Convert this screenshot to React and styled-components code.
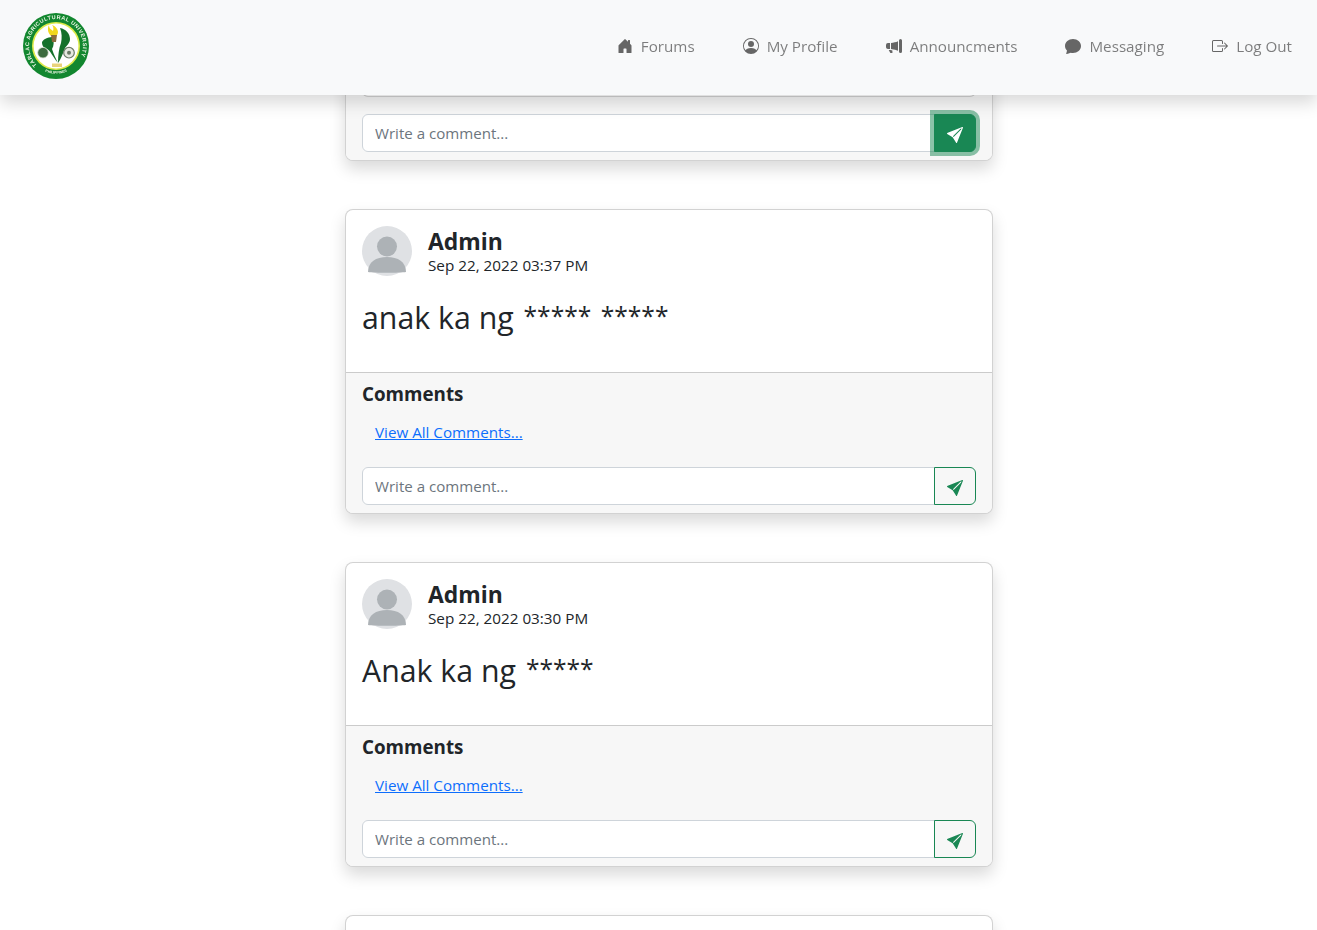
import styled, { createGlobalStyle } from 'styled-components';
import {
  BsHouseDoorFill,
  BsPersonCircle,
  BsMegaphoneFill,
  BsChatFill,
  BsBoxArrowRight,
  BsSendFill,
} from 'react-icons/bs';

const GlobalStyle = createGlobalStyle`
  html, body {
    margin: 0;
    padding: 0;
    background: #fff;
    overflow: hidden;
  }
  body {
    font-family: "Open Sans", "Noto Sans", "Liberation Sans", sans-serif;
    color: #212529;
  }
  * {
    box-sizing: border-box;
  }
`;

const Page = styled.div`
  height: 930px;
  overflow: hidden;
`;

const Navbar = styled.nav`
  position: fixed;
  top: 0;
  left: 0;
  right: 0;
  z-index: 10;
  height: 95px;
  display: flex;
  align-items: center;
  justify-content: space-between;
  padding: 0 25px 4px 23px;
  background-color: #f8f9fa;
  box-shadow: 0 8px 16px rgba(0, 0, 0, 0.15);
`;

const LogoMark = styled.svg`
  width: 66px;
  height: 66px;
  filter: blur(0.35px);
`;

const NavLinks = styled.div`
  display: flex;
  align-items: center;
  gap: 48px;
`;

const NavLink = styled.a`
  display: flex;
  align-items: center;
  gap: 8px;
  font-size: 15.2px;
  line-height: 24px;
  color: rgba(0, 0, 0, 0.5);
  text-decoration: none;

  svg {
    width: 16px;
    height: 16px;
    color: #666;
  }
`;

const Feed = styled.main`
  width: 648px;
  margin-left: 345px;
  padding-top: 28px;
  display: flex;
  flex-direction: column;
  gap: 48px;
`;

const Card = styled.article`
  border: 1px solid rgba(0, 0, 0, 0.175);
  border-radius: 8px;
  background: #fff;
  box-shadow: 0 8px 16px rgba(0, 0, 0, 0.15);
  overflow: hidden;
  flex-shrink: 0;
  min-height: ${(p) => (p.$stub ? '60px' : '0')};
`;

const CardBody = styled.div`
  padding: 16px 16px 0;
  height: 162px;
`;

const Author = styled.div`
  display: flex;
  align-items: center;
  gap: 16px;
`;

const AuthorName = styled.div`
  font-size: 22.9px;
  font-weight: 700;
  line-height: 26px;
  margin-top: 2px;
`;

const PostDate = styled.div`
  font-size: 15.25px;
  line-height: 20px;
`;

const PostText = styled.div`
  margin-top: 22px;
  font-size: 30.3px;
  line-height: 40px;
`;

const Stars = styled.span`
  font-size: 24.6px;
  margin-left: 2px;
  word-spacing: 3px;
  position: relative;
  top: -4px;
`;

const CardFooter = styled.div`
  padding: 8px 16px;
  background: #f7f7f7;
  border-top: ${(p) => (p.$flush ? 'none' : '1px solid rgba(0, 0, 0, 0.175)')};
`;

const CommentsTitle = styled.div`
  font-size: 18.8px;
  font-weight: 700;
  line-height: 24px;
  position: relative;
  top: 1px;
`;

const ViewAll = styled.a`
  display: block;
  margin: 15px 0 23px 13px;
  font-size: 15.2px;
  line-height: 24px;
  color: #0d6efd;
  text-decoration: underline;
`;

const CommentBox = styled.div`
  height: 60px;
  margin-bottom: 17px;
  border: 1px solid rgba(0, 0, 0, 0.175);
  border-radius: 6px;
  background: #fff;
`;

const CommentForm = styled.form`
  display: flex;
  height: 38px;
`;

const CommentInput = styled.input`
  flex: 1;
  min-width: 0;
  height: 38px;
  padding: 6px 12px;
  border: 1px solid #ced4da;
  border-radius: 6px 0 0 6px;
  background: #fff;
  font-family: inherit;
  font-size: 15.1px;
  outline: none;

  &::placeholder {
    color: #6c757d;
    opacity: 1;
  }
`;

const SendButton = styled.button`
  position: relative;
  width: 42px;
  height: 38px;
  margin-left: -1px;
  padding: 3px 0 0;
  display: flex;
  align-items: center;
  justify-content: center;
  border: 1px solid #198754;
  border-radius: 0 6px 6px 0;
  background: ${(p) => (p.$focused ? '#198754' : 'transparent')};
  color: ${(p) => (p.$focused ? '#fff' : '#198754')};
  box-shadow: ${(p) => (p.$focused ? '0 0 0 4px rgba(25, 135, 84, 0.5)' : 'none')};

  svg {
    width: 16px;
    height: 16px;
  }
`;

const Logo = () => (
  <LogoMark viewBox="0 0 66 66" role="img" aria-label="Tarlac Agricultural University seal">
    <defs>
      <path id="sealTop" d="M15.7 50.3 A24.5 24.5 0 1 1 50.3 50.3" />
      <path id="sealBottom" d="M19 57 A28 28 0 0 0 47 57" />
    </defs>
    <circle cx="33" cy="33" r="33" fill="#12872f" />
    <circle cx="33" cy="33" r="24" fill="#dcea4a" />
    <circle cx="33" cy="33" r="22.4" fill="#fff" />
    <text fontFamily="Liberation Sans, sans-serif" fontSize="5" fontWeight="700" fill="#eef6e6" letterSpacing="0.45" transform="translate(33 33) scale(1.1) translate(-33 -33)">
      <textPath href="#sealTop">TARLAC AGRICULTURAL UNIVERSITY</textPath>
    </text>
    <text fontFamily="Liberation Sans, sans-serif" fontSize="3.6" fontWeight="700" fill="#eef6e6">
      <textPath href="#sealBottom" startOffset="12%">PHILIPPINES</textPath>
    </text>
    <path d="M19 29C21 25 27 24 30 24C31 29 31 33 29 36C31 42 33 46 35 50C30 44 27 37 24 36C21 35 19 33 19 29z" fill="#14702a" />
    <path d="M37 15C43 16 47 21 47 26C47 30 44 32 42 35C40 40 38 46 35 50C35 42 36 35 38 30C39 25 39 20 37 15z" fill="#14702a" />
    <path d="M26 12C26 16 28 16 30 18C31 15 30 13 29 12C32 13 35 16 35 19C35 21 34 22 33 23H28C25 20 24 16 26 12z" fill="#f2d71e" />
    <path d="M28 22h6l-1 7h-4z" fill="#8a6a3d" />
    <circle cx="20" cy="39.7" r="5.3" fill="#3d6b3f" stroke="#d9dfd0" strokeWidth="0.8" />
    <circle cx="46" cy="39.7" r="5.3" fill="#e6e8e0" stroke="#6a7a66" strokeWidth="1.2" />
    <circle cx="46" cy="39.7" r="2" fill="#6a7a66" />
    <path d="M29 50.5h10v3.5H29z" fill="#e8d27a" />
  </LogoMark>
);

const navItems = [
  { label: 'Forums', Icon: BsHouseDoorFill },
  { label: 'My Profile', Icon: BsPersonCircle },
  { label: 'Announcments', Icon: BsMegaphoneFill },
  { label: 'Messaging', Icon: BsChatFill },
  { label: 'Log Out', Icon: BsBoxArrowRight },
];

const posts = [
  { id: 1, date: 'Sep 22, 2022 03:37 PM', text: 'anak ka ng', stars: '***** *****' },
  { id: 2, date: 'Sep 22, 2022 03:30 PM', text: 'Anak ka ng', stars: '*****' },
];

const Avatar = () => (
  <svg width="50" height="50" viewBox="0 0 50 50" aria-hidden="true">
    <circle cx="25" cy="25" r="25" fill="#dfe1e4" />
    <g fill="#adb2b6">
      <circle cx="25" cy="20.5" r="10" />
      <path d="M6 46c0-10 8-15 19-15s19 5 19 15c-6 1-32 1-38 0z" />
    </g>
  </svg>
);

const CommentRow = ({ focused }) => (
  <CommentForm onSubmit={(e) => e.preventDefault()}>
    <CommentInput placeholder="Write a comment..." />
    <SendButton type="submit" $focused={focused} aria-label="Send">
      <BsSendFill />
    </SendButton>
  </CommentForm>
);

const Post = ({ post }) => (
  <Card>
    <CardBody>
      <Author>
        <Avatar />
        <div>
          <AuthorName>Admin</AuthorName>
          <PostDate>{post.date}</PostDate>
        </div>
      </Author>
      <PostText>
        {post.text} <Stars>{post.stars}</Stars>
      </PostText>
    </CardBody>
    <CardFooter>
      <CommentsTitle>Comments</CommentsTitle>
      <ViewAll href="#">View All Comments...</ViewAll>
      <CommentRow />
    </CardFooter>
  </Card>
);

export default function App() {
  return (
    <Page>
      <GlobalStyle />
      <Navbar>
        <Logo />
        <NavLinks>
          {navItems.map(({ label, Icon }) => (
            <NavLink href="#" key={label}>
              <Icon />
              {label}
            </NavLink>
          ))}
        </NavLinks>
      </Navbar>
      <Feed>
        <Card>
          <CardFooter $flush>
            <CommentBox />
            <CommentRow focused />
          </CardFooter>
        </Card>
        {posts.map((post) => (
          <Post key={post.id} post={post} />
        ))}
        <Card $stub />
      </Feed>
    </Page>
  );
}
